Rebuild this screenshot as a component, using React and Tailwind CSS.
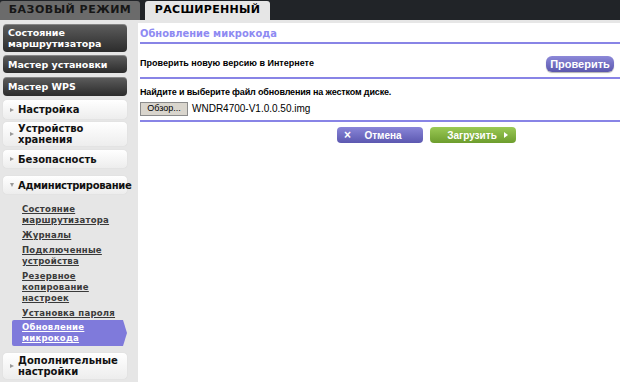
import { useState } from 'react';

const darkBtn =
  'rounded-[4px] bg-gradient-to-b from-[#5e5e5e] to-[#2c2c2c] text-white font-bold text-[9.5px] leading-[11px] px-[5px] flex items-center shadow-[inset_0_1px_0_rgba(255,255,255,0.25)]';
const lightBtn =
  'rounded-[4px] bg-gradient-to-b from-white to-[#ededed] text-[#111] font-bold text-[10px] leading-[11px] pl-[7px] flex items-center gap-[4px] shadow-[0_0_1px_rgba(0,0,0,0.15)]';

function Arrow({ down }) {
  return down ? (
    <span className="w-0 h-0 shrink-0 border-l-[2.5px] border-r-[2.5px] border-t-[4px] border-l-transparent border-r-transparent border-t-[#999]" />
  ) : (
    <span className="w-0 h-0 shrink-0 border-t-[2.5px] border-b-[2.5px] border-l-[4px] border-t-transparent border-b-transparent border-l-[#999]" />
  );
}

const subLinks = [
  'Состояние маршрутизатора',
  'Журналы',
  'Подключенные устройства',
  'Резервное копирование настроек',
  'Установка пароля',
];

export default function App() {
  const [tab] = useState('adv');

  return (
    <div
      className="w-[620px] h-[382px] bg-[#e6e6e6] flex flex-col overflow-hidden"
      style={{ fontFamily: '"DejaVu Sans", Verdana, sans-serif' }}
    >
      {/* Top tabs */}
      <div className="h-[20px] bg-[#212428] flex items-end shrink-0">
        <div className="w-[140px] h-[19px] bg-[#6b6b6b] rounded-t-[3px] flex items-center justify-center text-[11px] font-bold tracking-[0.5px] text-[#161616]">
          БАЗОВЫЙ РЕЖИМ
        </div>
        <div className={`ml-[5px] w-[125px] h-[19px] rounded-t-[3px] flex items-center justify-center text-[11px] font-bold tracking-[0.3px] text-black ${tab === 'adv' ? 'bg-[#e6e6e6]' : ''}`}>
          РАСШИРЕННЫЙ
        </div>
      </div>

      <div className="flex flex-1 pt-[3px] min-h-0">
        {/* Sidebar */}
        <div className="w-[138px] shrink-0 pl-[3px] pr-[11px] flex flex-col">
          <div className={`${darkBtn} h-[28px] mt-[1px]`}>Состояние маршрутизатора</div>
          <div className={`${darkBtn} h-[18px] mt-[3px]`}>Мастер установки</div>
          <div className={`${darkBtn} h-[19px] mt-[4px]`}>Мастер WPS</div>

          <div className={`${lightBtn} h-[19px] mt-[4px]`}>
            <Arrow />
            Настройка
          </div>
          <div className={`${lightBtn} h-[24px] mt-[3px]`}>
            <Arrow />
            <span>
              Устройство
              <br />
              хранения
            </span>
          </div>
          <div className={`${lightBtn} h-[18px] mt-[4px]`}>
            <Arrow />
            Безопасность
          </div>
          <div className={`${lightBtn} h-[18px] mt-[8px] tracking-[-0.3px] pl-[6px] gap-[3px]`}>
            <Arrow down />
            Администрирование
          </div>

          <div className="flex flex-col gap-[4px] pl-[19px] pr-[2px] mt-[10px] text-[8.5px] leading-[11px] tracking-[0.25px] font-bold text-[#3a3a3a]">
            {subLinks.map((l) => (
              <a key={l} href="#" className="underline underline-offset-[1px]">
                {l}
              </a>
            ))}
          </div>

          <div className="relative mt-[1px] ml-[9px] w-[111px] h-[26px] bg-[#7f7adb] pl-[10px] flex items-center text-[8.5px] leading-[11px] tracking-[0.25px] font-bold text-white underline underline-offset-[1px] rounded-l-[2px]">
            Обновление микрокода
            <span className="absolute right-[-4px] top-0 w-0 h-0 border-t-[13px] border-b-[13px] border-l-[4px] border-t-transparent border-b-transparent border-l-[#7f7adb]" />
          </div>

          <div className={`${lightBtn} h-[26px] mt-[7px]`}>
            <Arrow />
            <span>
              Дополнительные
              <br />
              настройки
            </span>
          </div>
        </div>

        {/* Main */}
        <div className="flex-1 bg-white pl-[2px] flex flex-col" style={{ fontFamily: '"Liberation Sans", Arial, sans-serif' }}>
          <div
            className="h-[19px] flex items-center text-[11px] font-bold text-[#8e8af2] pt-[3px]"
            style={{ fontFamily: '"DejaVu Sans Condensed", "DejaVu Sans", sans-serif' }}
          >
            Обновление микрокода
          </div>
          <div className="h-[2px] bg-[#8884e6]" />

          <div className="flex items-center justify-between h-[33px] pt-[7px] pr-[6px]">
            <span className="text-[9px] font-bold text-black">Проверить новую версию в Интернете</span>
            <button className="w-[68px] h-[16px] rounded-[6px] bg-gradient-to-b from-[#8d89d9] to-[#5b57ad] text-white text-[11px] font-bold shadow-[0_1px_1px_rgba(0,0,0,0.3)]">
              Проверить
            </button>
          </div>
          <div className="h-[2px] bg-[#8884e6]" />

          <div className="text-[9px] font-bold text-black mt-[8px] leading-[10px] tracking-[-0.15px]">
            Найдите и выберите файл обновления на жестком диске.
          </div>
          <div className="flex items-center mt-[4px] gap-[4px]">
            <button className="w-[48px] h-[14px] bg-[#d9d5cd] border border-[#8c8c8c] text-[9px] text-black leading-none">
              Обзор...
            </button>
            <span className="text-[10px] text-black">WNDR4700-V1.0.0.50.img</span>
          </div>
          <div className="h-[2px] bg-[#8884e6] mt-[4px]" />

          <div className="flex justify-end gap-[7px] mt-[5px] pr-[104px]">
            <button className="w-[86px] h-[16px] rounded-[4px] bg-gradient-to-b from-[#8a86d8] to-[#5c58b0] text-white text-[10px] font-bold flex items-center pl-[7px] pr-[8px]">
              <span className="text-[12px] leading-none">×</span>
              <span className="flex-1 text-center">Отмена</span>
            </button>
            <button className="w-[86px] h-[16px] rounded-[4px] bg-gradient-to-b from-[#9bca55] to-[#6d9d2d] text-white text-[10px] font-bold flex items-center pl-[10px] pr-[8px]">
              <span className="flex-1 text-center">Загрузить</span>
              <span className="w-0 h-0 border-t-[3px] border-b-[3px] border-l-[4px] border-t-transparent border-b-transparent border-l-white" />
            </button>
          </div>
        </div>
      </div>
    </div>
  );
}
